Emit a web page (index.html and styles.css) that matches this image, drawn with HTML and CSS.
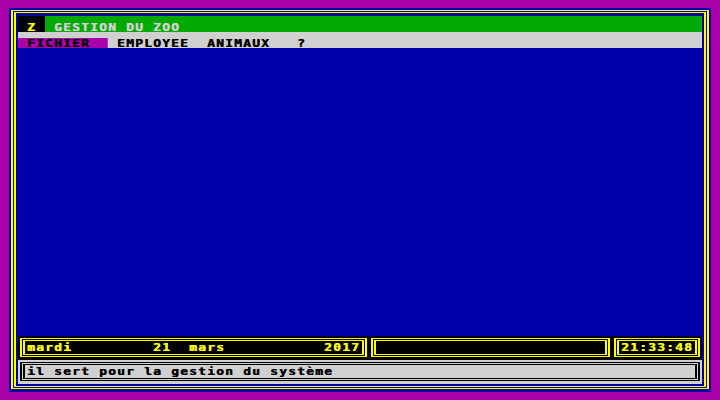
FILE: index.html
```html
<!DOCTYPE html>
<html lang="fr">
<head>
<meta charset="utf-8">
<title>Gestion du zoo</title>
<link rel="stylesheet" href="styles.css">
</head>
<body>
<div class="screen">
  <div class="f-outer"><div class="f-gap"><div class="f-inner">
    <div class="content">
      <div class="titlebar">
        <div class="zbox"><span class="t">Z</span></div>
        <div class="title"><span class="t">GESTION DU ZOO</span></div>
      </div>
      <div class="menubar">
        <span class="t"><span class="sel"> FICHIER  </span> EMPLOYEE  ANIMAUX   ?</span>
      </div>
      <div class="desktop"></div>
      <div class="datebar">
        <div class="box yb b1"><div class="mid"><div class="in"><span class="t">mardi         21  mars           2017</span></div></div></div>
        <div class="box yb b2"><div class="mid"><div class="in"></div></div></div>
        <div class="box yb b3"><div class="mid"><div class="in"><span class="t">21:33:48</span></div></div></div>
      </div>
      <div class="statusbar">
        <div class="box kb sb"><div class="mid"><div class="in"><span class="t">il sert pour la gestion du système</span></div></div></div>
      </div>
    </div>
  </div></div></div>
</div>
</body>
</html>
```

FILE: styles.css
```css
* { box-sizing: border-box; }
html, body { margin: 0; padding: 0; }
body {
  background: #aa00aa;
  width: 720px;
  height: 400px;
  overflow: hidden;
}
.screen {
  width: 702px;
  height: 384px;
  margin: 8px 9px;
  padding: 2px 2px 3px 2px;
  background: #0000aa;
  display: flex;
}
.f-outer {
  flex: 1;
  display: flex;
  border: solid #ffff00;
  border-width: 1px 2px;
}
.f-gap {
  flex: 1;
  display: flex;
  border: 1px solid #0000aa;
}
.f-inner {
  flex: 1;
  display: flex;
  border: solid #ffff00;
  border-width: 1px 2px;
  padding: 3px 2px 2px 2px;
}
.content {
  flex: 1;
  display: flex;
  flex-direction: column;
  min-width: 0;
}
.t {
  display: block;
  width: max-content;
  white-space: pre;
  font-family: "DejaVu Sans Mono", monospace;
  font-weight: bold;
  font-size: 10px;
  line-height: 8px;
  height: 8px;
  letter-spacing: 0.903px;
  transform: scaleX(1.3);
  transform-origin: 0 0;
  text-shadow: 0.4px 0 0 currentColor;
}
.titlebar {
  height: 16px;
  display: flex;
}
.zbox {
  width: 27px;
  background: #000;
  color: #ffff00;
  padding: 8px 0 0 9px;
  overflow: hidden;
}
.title {
  flex: 1;
  background: #00aa00;
  color: #d0d0d0;
  padding: 8px 0 0 9px;
  overflow: hidden;
}
.menubar {
  height: 16px;
  background: #d0d0d0;
  color: #000;
  padding-top: 8px;
  overflow: hidden;
}
.sel { background: #aa00aa; }
.desktop {
  flex: 1;
  background: #0000aa;
}
.datebar {
  height: 24px;
  background: #000;
  display: flex;
  gap: 4px;
  padding: 2px 2px 3px 2px;
  color: #ffff00;
}
.statusbar {
  height: 24px;
  background: #d0d0d0;
  display: flex;
  padding: 2px 2px 3px 2px;
  color: #000;
}
.box {
  display: flex;
  border-style: solid;
  border-width: 1px 2px;
}
.mid {
  flex: 1;
  display: flex;
  border: 1px solid;
}
.in {
  flex: 1;
  border-style: solid;
  border-width: 1px 2px;
  padding: 3px 0 0 2px;
  overflow: hidden;
}
.yb, .yb .in { border-color: #ffff00; }
.yb .mid { border-color: #000; }
.kb, .kb .in { border-color: #000; }
.kb .mid { border-color: #d0d0d0; }
.b1 { width: 347px; }
.b2 { width: 239px; }
.b3 { width: 86px; }
.sb { flex: 1; }
```
